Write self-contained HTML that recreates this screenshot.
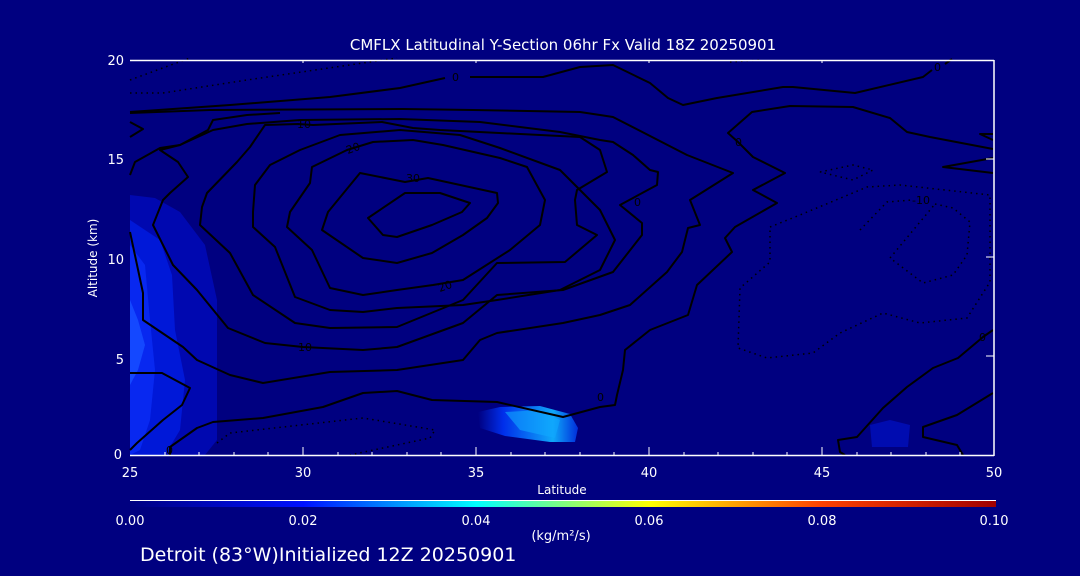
<!DOCTYPE html>
<html><head><style>
html,body{margin:0;padding:0;background:#000080;}
body{width:1080px;height:576px;overflow:hidden;position:relative;}
svg{position:absolute;left:0;top:0;}
text{fill:#fff;font-family:"DejaVu Sans","Liberation Sans",sans-serif;}
</style></head><body>
<svg width="1080" height="576" viewBox="0 0 1080 576">
<defs>
<linearGradient id="cb" x1="0" x2="1">
<stop offset="0" stop-color="#000080"/>
<stop offset="0.2" stop-color="#0010ff"/>
<stop offset="0.4" stop-color="#00ffff"/>
<stop offset="0.6" stop-color="#ffff00"/>
<stop offset="0.8" stop-color="#ff4000"/>
<stop offset="1" stop-color="#a00000"/>
</linearGradient>
<linearGradient id="bl" x1="0" x2="1">
<stop offset="0" stop-color="#000080"/>
<stop offset="0.25" stop-color="#0030f0"/>
<stop offset="0.75" stop-color="#10b0ff"/>
<stop offset="1" stop-color="#0030e0"/>
</linearGradient>
</defs>
<rect width="1080" height="576" fill="#000080"/>
<!-- left blue blobs -->
<path d="M130,195 L155,198 L180,212 L205,245 L217,300 L217,440 L205,455 L130,455Z" fill="#0008b0"/>
<path d="M130,220 L160,240 L172,275 L175,330 L185,380 L180,430 L165,455 L130,455Z" fill="#0018d8"/>
<path d="M130,245 L145,265 L150,320 L155,370 L150,420 L140,450 L130,455Z" fill="#0828f0"/>
<path d="M130,300 L138,320 L145,345 L138,370 L130,385Z" fill="#1448ff"/>
<!-- middle blob -->
<path d="M478,412 L500,407 L540,406 L570,414 L578,428 L575,442 L550,442 L505,436 L480,428Z" fill="url(#bl)" opacity="0.95"/>
<path d="M505,412 L540,410 L560,420 L555,438 L520,430Z" fill="#10a8ff" opacity="0.6"/>
<path d="M870,425 L890,420 L910,425 L908,447 L872,447Z" fill="#000cb0"/>
<!-- contours -->
<g fill="none" stroke="#000" stroke-width="2" stroke-linejoin="round">
<path d="M368,218 L405,193 L440,193 L470,203 L462,212 L432,225 L397,237 L383,235 Z"/>
<path d="M328,212 L360,173 L405,182 L428,178 L497,193 L498,203 L487,218 L463,235 L432,253 L397,263 L363,258 L322,230 Z"/>
<path d="M290,212 L310,183 L312,167 L347,150 L373,142 L413,140 L443,145 L500,158 L527,167 L545,200 L540,225 L510,250 L463,280 L433,285 L397,290 L363,295 L330,288 L312,250 L287,227 Z"/>
<path d="M253,212 L255,185 L270,165 L300,150 L340,135 L400,130 L460,135 L500,148 L560,170 L600,210 L615,240 L600,270 L560,290 L497,300 L463,305 L397,308 L363,312 L330,310 L295,297 L275,247 L253,227 Z"/>
<path d="M202,207 L207,193 L237,162 L250,147 L265,125 L298,124 L313,125 L382,122 L413,128 L440,130 L580,137 L600,150 L607,172 L577,190 L575,200 L577,225 L597,235 L565,262 L497,263 L463,300 L397,327 L330,328 L295,323 L253,295 L230,253 L200,225 Z"/>
<path d="M163,200 L153,225 L173,265 L197,290 L228,328 L265,343 L303,347 L363,350 L397,347 L463,323 L497,295 L563,290 L613,272 L642,235 L642,223 L620,205 L633,198 L657,185 L658,172 L650,170 L633,155 L613,142 L600,140 L560,132 L480,122 L400,119 L300,120 L247,124 L213,130 L180,145 L160,150 L178,162 L188,177 L170,193 Z"/>
<path d="M130,232 L143,293 L143,320 L183,347 L197,360 L230,375 L263,383 L330,372 L397,370 L463,360 L480,340 L497,333 L563,323 L600,315 L630,305 L667,272 L682,252 L688,228 L700,225 L690,200 L733,173 L687,155 L613,117 L600,115 L580,112 L473,110 L403,109 L210,110 L130,113"/>
<path d="M130,112 L230,105 L330,97 L400,88 L445,78 M470,77 L543,77 L580,67 L613,65 L650,83 L668,98 L683,105 L717,98 L783,87 L793,87 L855,93 L923,77 L932,70 M945,64 L952,59"/>
<path d="M130,122 L143,129 L130,137"/>
<path d="M130,175 L135,162 L160,148 L180,145 L208,130 L213,120 L247,115 L280,113"/>
<path d="M130,373 L162,373 L190,388 L182,405 L163,420 L137,443 L130,450"/>
<path d="M170,455 L170,447 L197,428 L213,422 L263,418 L323,407 L363,393 L397,391 L432,400 L497,402 L563,417 L600,407 L615,405 L617,395 L623,370 L625,350 L650,330 L688,315 L697,285 L732,252 L725,238 L735,227 L777,203 L753,190 L785,173 L753,157 L738,142 L728,133 L752,112 L790,106 L853,107 L890,118 L907,132 L930,137 L993,149"/>
<path d="M993,134 L980,134 L993,140"/>
<path d="M993,158 L943,167 L993,173"/>
<path d="M993,330 L983,337 L958,358 L933,368 L907,387 L883,408 L857,437 L838,440 L840,452 L845,455"/>
<path d="M993,393 L957,415 L923,427 L923,437 L957,445 L963,455"/>
</g>
<g fill="none" stroke="#000" stroke-width="1.5" stroke-dasharray="1.5,4">
<path d="M130,80 L190,58 M130,93 L163,93 L247,80 L397,58"/>
<path d="M770,227 L800,215 L867,187 L900,185 L990,195 L990,282 L967,318 L920,323 L883,313 L840,333 L813,353 L767,358 L738,348 L740,288 L770,262 Z"/>
<path d="M860,230 L887,202 L912,200 M935,204 L953,208 L970,222 L967,255 L953,275 L923,283 L890,258 Z"/>
<path d="M820,172 L853,165 L873,170 L853,180 Z"/>
<path d="M217,443 L230,433 L363,418 L435,430 L430,438 L350,455"/>
<path d="M730,62 L760,60"/>
</g>
<!-- labels -->
<g font-size="11" fill="#000" style="fill:#000">
<text x="452" y="81" style="fill:#000">0</text>
<text x="934" y="71" style="fill:#000">0</text>
<text x="297" y="128" style="fill:#000">10</text>
<text x="346" y="152" style="fill:#000" transform="rotate(-20 353 148)">20</text>
<text x="406" y="182" style="fill:#000">30</text>
<text x="438" y="290" style="fill:#000" transform="rotate(-20 445 286)">20</text>
<text x="298" y="351" style="fill:#000">10</text>
<text x="979" y="341" style="fill:#000">0</text>
<text x="597" y="401" style="fill:#000">0</text>
<text x="634" y="206" style="fill:#000">0</text>
<text x="735" y="146" style="fill:#000">0</text>
<text x="166" y="454" style="fill:#000">0</text>
<text x="912" y="204" style="fill:#000">-10</text>
</g>
<!-- axes -->
<g stroke="#fff" stroke-width="1.5">
<line x1="130" y1="60.5" x2="994" y2="60.5"/>
<line x1="130" y1="455.5" x2="994" y2="455.5"/>
<line x1="994" y1="60" x2="994" y2="456"/>
</g>
<g stroke="#fff" stroke-width="1">
<path d="M165,455v-3M199,455v-3M234,455v-3M268,455v-3M303,455v-8M338,455v-3M372,455v-3M407,455v-3M441,455v-3M476,455v-8M511,455v-3M545,455v-3M580,455v-3M614,455v-3M649,455v-8M684,455v-3M718,455v-3M753,455v-3M787,455v-3M822,455v-8M857,455v-3M891,455v-3M926,455v-3M960,455v-3"/>
<path d="M303,60v3M476,60v3M649,60v3M822,60v3"/>
<path d="M994,356h-8M994,257h-8M994,159h-8"/>
</g>
<g font-size="13">
<text x="122" y="459" text-anchor="end">0</text>
<text x="124" y="364" text-anchor="end">5</text>
<text x="124" y="264" text-anchor="end">10</text>
<text x="124" y="164" text-anchor="end">15</text>
<text x="124" y="65" text-anchor="end">20</text>
<text x="130" y="477" text-anchor="middle">25</text>
<text x="303" y="477" text-anchor="middle">30</text>
<text x="476" y="477" text-anchor="middle">35</text>
<text x="649" y="477" text-anchor="middle">40</text>
<text x="822" y="477" text-anchor="middle">45</text>
<text x="994" y="477" text-anchor="middle">50</text>
<text x="562" y="494" text-anchor="middle" font-size="12">Latitude</text>
<text x="97" y="258" font-size="12" text-anchor="middle" transform="rotate(-90 97 258)">Altitude (km)</text>
<text x="563" y="50" text-anchor="middle" font-size="15">CMFLX Latitudinal Y-Section 06hr  Fx Valid 18Z 20250901</text>
</g>
<line x1="130" y1="500.5" x2="996" y2="500.5" stroke="#fff" stroke-width="1"/>
<rect x="130" y="501" width="866" height="6" fill="url(#cb)"/>
<g font-size="13">
<text x="130" y="525" text-anchor="middle">0.00</text>
<text x="303" y="525" text-anchor="middle">0.02</text>
<text x="476" y="525" text-anchor="middle">0.04</text>
<text x="649" y="525" text-anchor="middle">0.06</text>
<text x="822" y="525" text-anchor="middle">0.08</text>
<text x="994" y="525" text-anchor="middle">0.10</text>
<text x="561" y="540" text-anchor="middle">(kg/m²/s)</text>
</g>
<text x="140" y="561" font-size="19">Detroit (83°W)Initialized 12Z 20250901</text>
</svg>
</body></html>
